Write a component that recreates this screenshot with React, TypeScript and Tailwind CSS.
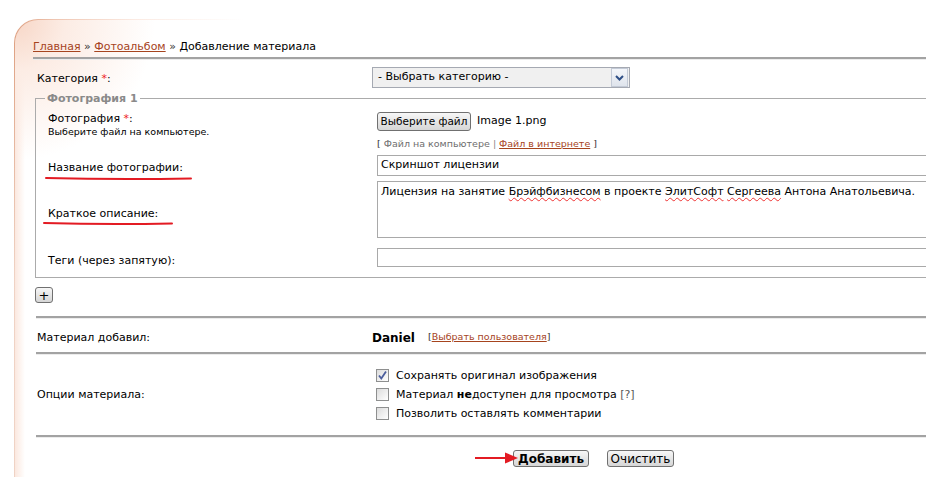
import React from "react";

const font = "font-['DejaVu_Sans',Verdana,sans-serif]";

function Hr({ className = "" }: { className?: string }) {
  return <div className={"h-[3px] border-t-2 border-b border-t-[#a3a3a3] border-b-[#ececec] " + className} />;
}

function Btn({ children, className = "" }: { children: React.ReactNode; className?: string }) {
  return (
    <button
      type="button"
      className={
        "flex items-center justify-center rounded-[3px] border border-[#707070] bg-[linear-gradient(#f7f7f7,#e6e6e6_50%,#d6d6d6)] text-black " +
        className
      }
    >
      {children}
    </button>
  );
}

function Checkbox({ checked = false }: { checked?: boolean }) {
  return (
    <span className="relative inline-flex h-[13px] w-[13px] shrink-0 items-center justify-center border border-[#8e8f8f] bg-[linear-gradient(135deg,#dcdcdc,#ffffff)]">
      {checked && (
        <svg width="11" height="11" viewBox="0 0 11 11" className="absolute">
          <path d="M2 5.5 L4.3 8.5 L9 1.5" fill="none" stroke="#4b5d9c" strokeWidth="1.8" />
        </svg>
      )}
    </span>
  );
}

function RedLine({ width }: { width: number }) {
  return (
    <svg width={width} height="5" className="absolute" viewBox={`0 0 ${width} 5`}>
      <path d={`M1 2 Q ${width / 2} 3.6 ${width - 1} 2.4`} fill="none" stroke="#e31b23" strokeWidth="2" strokeLinecap="round" />
    </svg>
  );
}

const wavy = "underline decoration-[#e33] decoration-wavy decoration-1 underline-offset-2";

export default function App() {
  return (
    <div className={"h-[477px] w-[926px] overflow-hidden bg-white text-[11px] text-black " + font}>
      <div className="ml-[14px] mt-[19px] h-[600px] rounded-tl-[24px] bg-[linear-gradient(to_bottom,rgba(255,255,255,0)_0px,rgba(255,255,255,0.55)_260px),linear-gradient(to_right,#dd9d7d,#efc5b1_40px,#fbeae2_120px,#ffffff_230px)] pl-px pt-px">
        <div className="h-full w-[1000px] rounded-tl-[23px] bg-[radial-gradient(circle_at_0_0,#f7d6c6_0px,#fcece4_50px,rgba(255,255,255,0)_140px),linear-gradient(to_right,#fbe8df,#ffffff_10px)] bg-white pl-[18px] pt-[19px]">
          {/* breadcrumb */}
          <div className="h-[16px] leading-[16px]">
            <a className="text-[#a6441e] underline">Главная</a>
            <span className="text-[#333]"> » </span>
            <a className="text-[#a6441e] underline">Фотоальбом</a>
            <span className="text-[#333]"> » </span>
            <span>Добавление материала</span>
          </div>
          <Hr className="mt-[2px]" />

          {/* category */}
          <div className="grid grid-cols-[339px_1fr] items-center pt-[7px]">
            <div className="relative top-[2px] pl-[4px]">
              Категория <span className="text-[#ee2222]">*</span>:
            </div>
            <div className="flex h-[21px] w-[258px] items-center border border-[#a5a9b2] bg-[#f0f0f0]">
              <span className="flex-1 pl-[5px]">- Выбрать категорию -</span>
              <span className="mr-px flex h-[19px] w-[17px] items-center justify-center border border-[#c3cad6] bg-[linear-gradient(#f4f6fa,#dfe4ec)]">
                <svg width="9" height="6" viewBox="0 0 9 6">
                  <path d="M1 1 L4.5 4.5 L8 1" fill="none" stroke="#2f4f86" strokeWidth="2" />
                </svg>
              </span>
            </div>
          </div>

          {/* fieldset */}
          <fieldset className="ml-[2px] mt-[3px] w-[960px] border border-[#ababab] pb-[10px] pl-[12px]">
            <legend className="ml-[-3px] px-[2px] text-[11px] font-bold leading-[15px] text-[#8a8a8a]">Фотография 1</legend>

            <div className="grid grid-cols-[329px_1fr] pt-[3px]">
              <div className="relative top-[3px]">
                <div className="leading-[14px]">
                  Фотография <span className="text-[#ee2222]">*</span>:
                </div>
                <div className="text-[9.5px] leading-[12px]">Выберите файл на компьютере.</div>
              </div>
              <div>
                <div className="mt-[3px] flex items-center">
                  <Btn className="h-[19px] w-[94px] text-[10.5px]">Выберите файл</Btn>
                  <span className="ml-[6px]">Image 1.png</span>
                </div>
                <div className="relative top-[2px] mt-[4px] text-[9.5px] leading-[14px] text-[#333]">
                  [ <span className="text-[#6e6e6e]">Файл на компьютере</span> <span className="text-[#888]">|</span>{" "}
                  <a className="text-[#a6441e] underline">Файл в интернете</a> ]
                </div>
              </div>
            </div>

            <div className="grid grid-cols-[329px_1fr] items-center pt-[6px]">
              <div className="relative top-[3px]">
                Название фотографии:
                <div className="absolute left-[-3px] top-[16px]">
                  <RedLine width={147} />
                </div>
              </div>
              <div className="flex h-[21px] w-[600px] items-center border border-[#a9a9a9] pl-[3px]">Скриншот лицензии</div>
            </div>

            <div className="grid grid-cols-[329px_1fr] items-center pt-[5px]">
              <div className="relative top-[2px] pt-[5px]">
                Краткое описание:
                <div className="absolute left-[-5px] top-[20px]">
                  <RedLine width={130} />
                </div>
              </div>
              <div className="h-[57px] w-[600px] border border-[#a9a9a9] pl-[3px] pt-[2px] leading-[15px]">
                Лицензия на занятие <span className={wavy}>Брэйфбизнесом</span> в проекте <span className={wavy}>ЭлитСофт</span>{" "}
                <span className={wavy}>Сергеева</span> Антона Анатольевича.
              </div>
            </div>

            <div className="grid grid-cols-[329px_1fr] items-center pt-[10px]">
              <div className="relative top-[3px] leading-[15px]">Теги (через запятую):</div>
              <div className="h-[19px] w-[600px] border border-[#a9a9a9]" />
            </div>
          </fieldset>

          <Btn className="ml-[2px] mt-[9px] h-[16px] w-[18px] text-[13px] leading-none">+</Btn>

          <Hr className="ml-[3px] mt-[13px]" />
          <div className="grid h-[33px] grid-cols-[339px_1fr] items-center">
            <div className="relative top-[3px] pl-[4px]">Материал добавил:</div>
            <div className="relative top-[2px] flex items-center">
              <span className="text-[12px] font-bold">Daniel</span>
              <span className="ml-[13px] text-[9.5px] text-[#333]">
                [<a className="text-[#a6441e] underline">Выбрать пользователя</a>]
              </span>
            </div>
          </div>
          <Hr className="ml-[3px]" />

          <div className="grid grid-cols-[339px_1fr] items-center pb-[12px] pt-[11px]">
            <div className="relative top-[1px] pl-[4px]">Опции материала:</div>
            <div className="flex flex-col pl-[4px]">
              <label className="flex h-[19px] items-center gap-[7px]">
                <Checkbox checked />
                <span className="relative top-px">Сохранять оригинал изображения</span>
              </label>
              <label className="flex h-[19px] items-center gap-[7px]">
                <Checkbox />
                <span className="relative top-px">
                  Материал <b>не</b>доступен для просмотра <span className="text-[#555]">[?]</span>
                </span>
              </label>
              <label className="flex h-[19px] items-center gap-[7px]">
                <Checkbox />
                <span className="relative top-px">Позволить оставлять комментарии</span>
              </label>
            </div>
          </div>
          <Hr className="ml-[3px]" />

          <div className="relative mt-[12px] flex gap-[18px] pl-[480px]">
            <svg width="44" height="14" viewBox="0 0 44 14" className="absolute left-[442px] top-[1px]">
              <path d="M0 7 H32" stroke="#e31b23" strokeWidth="2" />
              <path d="M30 1.5 L43 7 L30 12.5 Z" fill="#e31b23" />
            </svg>
            <Btn className="h-[17px] w-[76px] text-[12px] font-bold">Добавить</Btn>
            <Btn className="h-[17px] w-[67px] text-[12px]">Очистить</Btn>
          </div>
        </div>
      </div>
    </div>
  );
}
